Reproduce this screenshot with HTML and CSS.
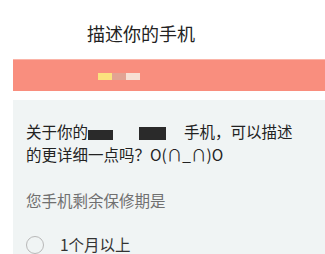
FILE: index.html
```html
<!DOCTYPE html>
<html lang="zh">
<head>
  <meta charset="UTF-8" />
  <meta name="viewport" content="width=device-width, initial-scale=1.0"/>
  <title>描述你的手机</title>
  <link rel="stylesheet" href="styles.css">
</head>
<body>

  <div class="header">描述你的手机</div>

  <div class="band">
    <span class="dot yellow"></span><span class="dot grey"></span><span class="dot cream"></span>
  </div>

  <div class="card">
    <p class="question">关于你的<span class="mask one"></span><span class="mask two"></span>手机，可以描述的更详细一点吗？O(∩_∩)O</p>
    <p class="label">您手机剩余保修期是</p>
    <div class="option">
      <span class="radio"></span>
      <span>1个月以上</span>
    </div>
  </div>

</body>
</html>
```

FILE: styles.css
```css
* {
  box-sizing: border-box;
}

html, body {
  margin: 0;
  padding: 0;
  background: #fff;
  font-family: "Noto Sans CJK SC", "Noto Sans", sans-serif;
  color: #222;
  overflow: hidden;
}

.header {
  padding: 22px 0 0 87px;
  font-size: 18px;
  line-height: 22px;
  height: 44px;
}

.band {
  margin: 15px 0 0 13px;
  height: 32px;
  background: #f98e7e;
  border-top: 1px solid #fbb4a8;
  display: flex;
  align-items: center;
  padding-left: 85px;
  padding-top: 2px;
}

.dot {
  display: inline-block;
  width: 14px;
  height: 7px;
}

.yellow { background: #fbe27e; }
.grey { background: #e2a393; }
.cream { background: #f7e0d4; }

.card {
  margin: 9px 0 0 13px;
  background: #f0f4f4;
  padding: 20px 25px 0 13px;
  height: 160px;
}

.question {
  margin: 0;
  font-size: 15.5px;
  line-height: 23px;
}

.mask {
  display: inline-block;
  background: #2a2a2a;
  vertical-align: -2px;
}

.mask.one {
  width: 25px;
  height: 10px;
  margin-right: 26px;
}

.mask.two {
  width: 27px;
  height: 13px;
  margin-right: 18px;
}

.label {
  margin: 23px 0 0;
  font-size: 15.5px;
  line-height: 23px;
  color: #707070;
}

.option {
  display: flex;
  align-items: center;
  gap: 16px;
  margin-top: 21px;
  font-size: 15.5px;
  line-height: 23px;
  color: #333;
}

.radio {
  width: 18px;
  height: 18px;
  border: 1.5px solid #b8b8b8;
  border-radius: 50%;
}
```
